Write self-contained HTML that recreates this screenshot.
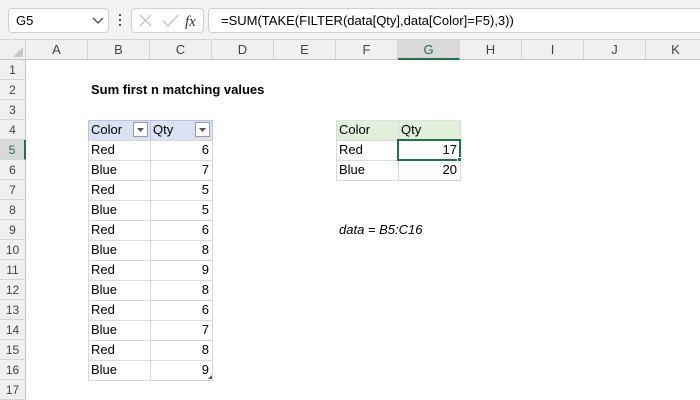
<!DOCTYPE html>
<html><head><meta charset="utf-8"><style>
*{margin:0;padding:0;box-sizing:border-box}
body{width:700px;height:400px;overflow:hidden;background:#fff;font-family:"Liberation Sans",Calibri,sans-serif;font-size:13px;color:#000;position:relative}
.a{position:absolute}
.ch{position:absolute;top:40px;height:20px;background:#f0f0f0;border-right:1px solid #d4d4d4;border-bottom:1px solid #c6c6c6;text-align:center;line-height:20px;color:#444;font-size:13px}
.rh{position:absolute;left:0;width:26px;height:20px;background:#f0f0f0;border-bottom:1px solid #d4d4d4;border-right:1px solid #c6c6c6;text-align:center;line-height:20px;color:#444;font-size:12px}
.c{position:absolute;height:20px;line-height:20px;padding:0 3px;white-space:nowrap}
.r{text-align:right}
</style></head><body>
<div class="a" style="left:0;top:0;width:700px;height:40px;background:#f3f3f3;border-bottom:1px solid #d4d4d4"></div>
<div class="a" style="left:8px;top:8px;width:101px;height:25px;background:#fff;border:1px solid #d0d0d0;border-radius:4px;line-height:23px;padding-left:7px">G5</div>
<svg class="a" style="left:92px;top:17px" width="12" height="8"><path d="M1 1 L6 6 L11 1" stroke="#444" stroke-width="1.3" fill="none"/></svg>
<div class="a" style="left:119px;top:14px;width:2px;height:2px;background:#555;box-shadow:0 5px 0 #555,0 10px 0 #555"></div>
<div class="a" style="left:131px;top:8px;width:73px;height:25px;background:#fff;border:1px solid #d0d0d0;border-radius:4px"></div>
<svg class="a" style="left:138px;top:13px" width="60" height="16"><path d="M2 2 L13 13 M13 2 L2 13" stroke="#bbb" stroke-width="1.2"/><path d="M25 8 L30 13 L40 2" stroke="#bbb" stroke-width="1.2" fill="none"/><text x="47" y="13" font-family="Liberation Serif" font-style="italic" font-size="15" fill="#333">fx</text></svg>
<div class="a" style="left:208px;top:8px;width:500px;height:25px;background:#fff;border:1px solid #d0d0d0;border-radius:4px;line-height:23px;padding-left:12px">=SUM(TAKE(FILTER(data[Qty],data[Color]=F5),3))</div>
<div class="ch" style="left:0;width:26px"></div>
<svg class="a" style="left:12px;top:46px" width="12" height="12"><path d="M11 1 L11 11 L1 11Z" fill="#c8c8c8"/></svg>
<div class="ch" style="left:26px;width:62px">A</div>
<div class="ch" style="left:88px;width:62px">B</div>
<div class="ch" style="left:150px;width:62px">C</div>
<div class="ch" style="left:212px;width:62px">D</div>
<div class="ch" style="left:274px;width:62px">E</div>
<div class="ch" style="left:336px;width:62px">F</div>
<div class="ch" style="left:398px;width:62px;background:#d9d9d9;border-bottom:2px solid #217346;color:#217346">G</div>
<div class="ch" style="left:460px;width:62px">H</div>
<div class="ch" style="left:522px;width:62px">I</div>
<div class="ch" style="left:584px;width:62px">J</div>
<div class="ch" style="left:646px;width:60px">K</div>
<div class="rh" style="top:60px">1</div><div class="rh" style="top:80px">2</div><div class="rh" style="top:100px">3</div><div class="rh" style="top:120px">4</div>
<div class="rh" style="top:140px;background:#d9d9d9;border-right:2px solid #217346;color:#217346">5</div>
<div class="rh" style="top:160px">6</div><div class="rh" style="top:180px">7</div><div class="rh" style="top:200px">8</div><div class="rh" style="top:220px">9</div><div class="rh" style="top:240px">10</div><div class="rh" style="top:260px">11</div><div class="rh" style="top:280px">12</div><div class="rh" style="top:300px">13</div><div class="rh" style="top:320px">14</div><div class="rh" style="top:340px">15</div><div class="rh" style="top:360px">16</div><div class="rh" style="top:380px">17</div>
<div class="c" style="left:88px;top:80px;font-weight:bold">Sum first n matching values</div>
<div class="a" style="left:88px;top:120px;width:124px;height:20px;background:#d9e1f2"></div>
<svg class="a" style="left:88px;top:120px" width="125" height="261">
<g stroke="#d9d9d9" stroke-width="1" fill="none">
<path d="M0.5 0 V260.5 H124.5 V0 H0.5 M62.5 0 V260.5"/>
<path d="M0 20.5H125M0 40.5H125M0 60.5H125M0 80.5H125M0 100.5H125M0 120.5H125M0 140.5H125M0 160.5H125M0 180.5H125M0 200.5H125M0 220.5H125M0 240.5H125"/>
</g>
<g stroke="#b4c6e7" fill="none"><path d="M0 0.5H125M0.5 0V20M62.5 0V20M124.5 0V20"/></g>
<rect x="45.5" y="2.5" width="14" height="14" fill="#fff" stroke="#999"/><path d="M49 8 L56 8 L52.5 12Z" fill="#555"/>
<rect x="107.5" y="2.5" width="14" height="14" fill="#fff" stroke="#999"/><path d="M111 8 L118 8 L114.5 12Z" fill="#555"/>
<path d="M120 259 L124 259 L124 255Z" fill="#3f51a0"/>
</svg>
<div class="c" style="left:88px;top:120px">Color</div><div class="c" style="left:150px;top:120px">Qty</div>
<div class="c" style="left:88px;top:140px">Red</div><div class="c r" style="left:150px;top:140px;width:62px">6</div>
<div class="c" style="left:88px;top:160px">Blue</div><div class="c r" style="left:150px;top:160px;width:62px">7</div>
<div class="c" style="left:88px;top:180px">Red</div><div class="c r" style="left:150px;top:180px;width:62px">5</div>
<div class="c" style="left:88px;top:200px">Blue</div><div class="c r" style="left:150px;top:200px;width:62px">5</div>
<div class="c" style="left:88px;top:220px">Red</div><div class="c r" style="left:150px;top:220px;width:62px">6</div>
<div class="c" style="left:88px;top:240px">Blue</div><div class="c r" style="left:150px;top:240px;width:62px">8</div>
<div class="c" style="left:88px;top:260px">Red</div><div class="c r" style="left:150px;top:260px;width:62px">9</div>
<div class="c" style="left:88px;top:280px">Blue</div><div class="c r" style="left:150px;top:280px;width:62px">8</div>
<div class="c" style="left:88px;top:300px">Red</div><div class="c r" style="left:150px;top:300px;width:62px">6</div>
<div class="c" style="left:88px;top:320px">Blue</div><div class="c r" style="left:150px;top:320px;width:62px">7</div>
<div class="c" style="left:88px;top:340px">Red</div><div class="c r" style="left:150px;top:340px;width:62px">8</div>
<div class="c" style="left:88px;top:360px">Blue</div><div class="c r" style="left:150px;top:360px;width:62px">9</div>
<div class="a" style="left:336px;top:120px;width:124px;height:20px;background:#e2efda"></div>
<svg class="a" style="left:336px;top:120px" width="126" height="62">
<g stroke="#d9d9d9" fill="none"><path d="M0.5 0V60.5H124.5V0H0.5M62.5 0V60.5M0 20.5H125M0 40.5H125"/></g>
<rect x="62" y="20" width="62" height="20" fill="none" stroke="#217346" stroke-width="2"/>
<rect x="121.5" y="37.5" width="4" height="4" fill="#217346" stroke="#fff" stroke-width="1"/>
</svg>
<div class="c" style="left:336px;top:120px">Color</div><div class="c" style="left:398px;top:120px">Qty</div>
<div class="c" style="left:336px;top:140px">Red</div><div class="c r" style="left:398px;top:140px;width:62px">17</div>
<div class="c" style="left:336px;top:160px">Blue</div><div class="c r" style="left:398px;top:160px;width:62px">20</div>
<div class="c" style="left:336px;top:220px;font-style:italic">data = B5:C16</div>
</body></html>
